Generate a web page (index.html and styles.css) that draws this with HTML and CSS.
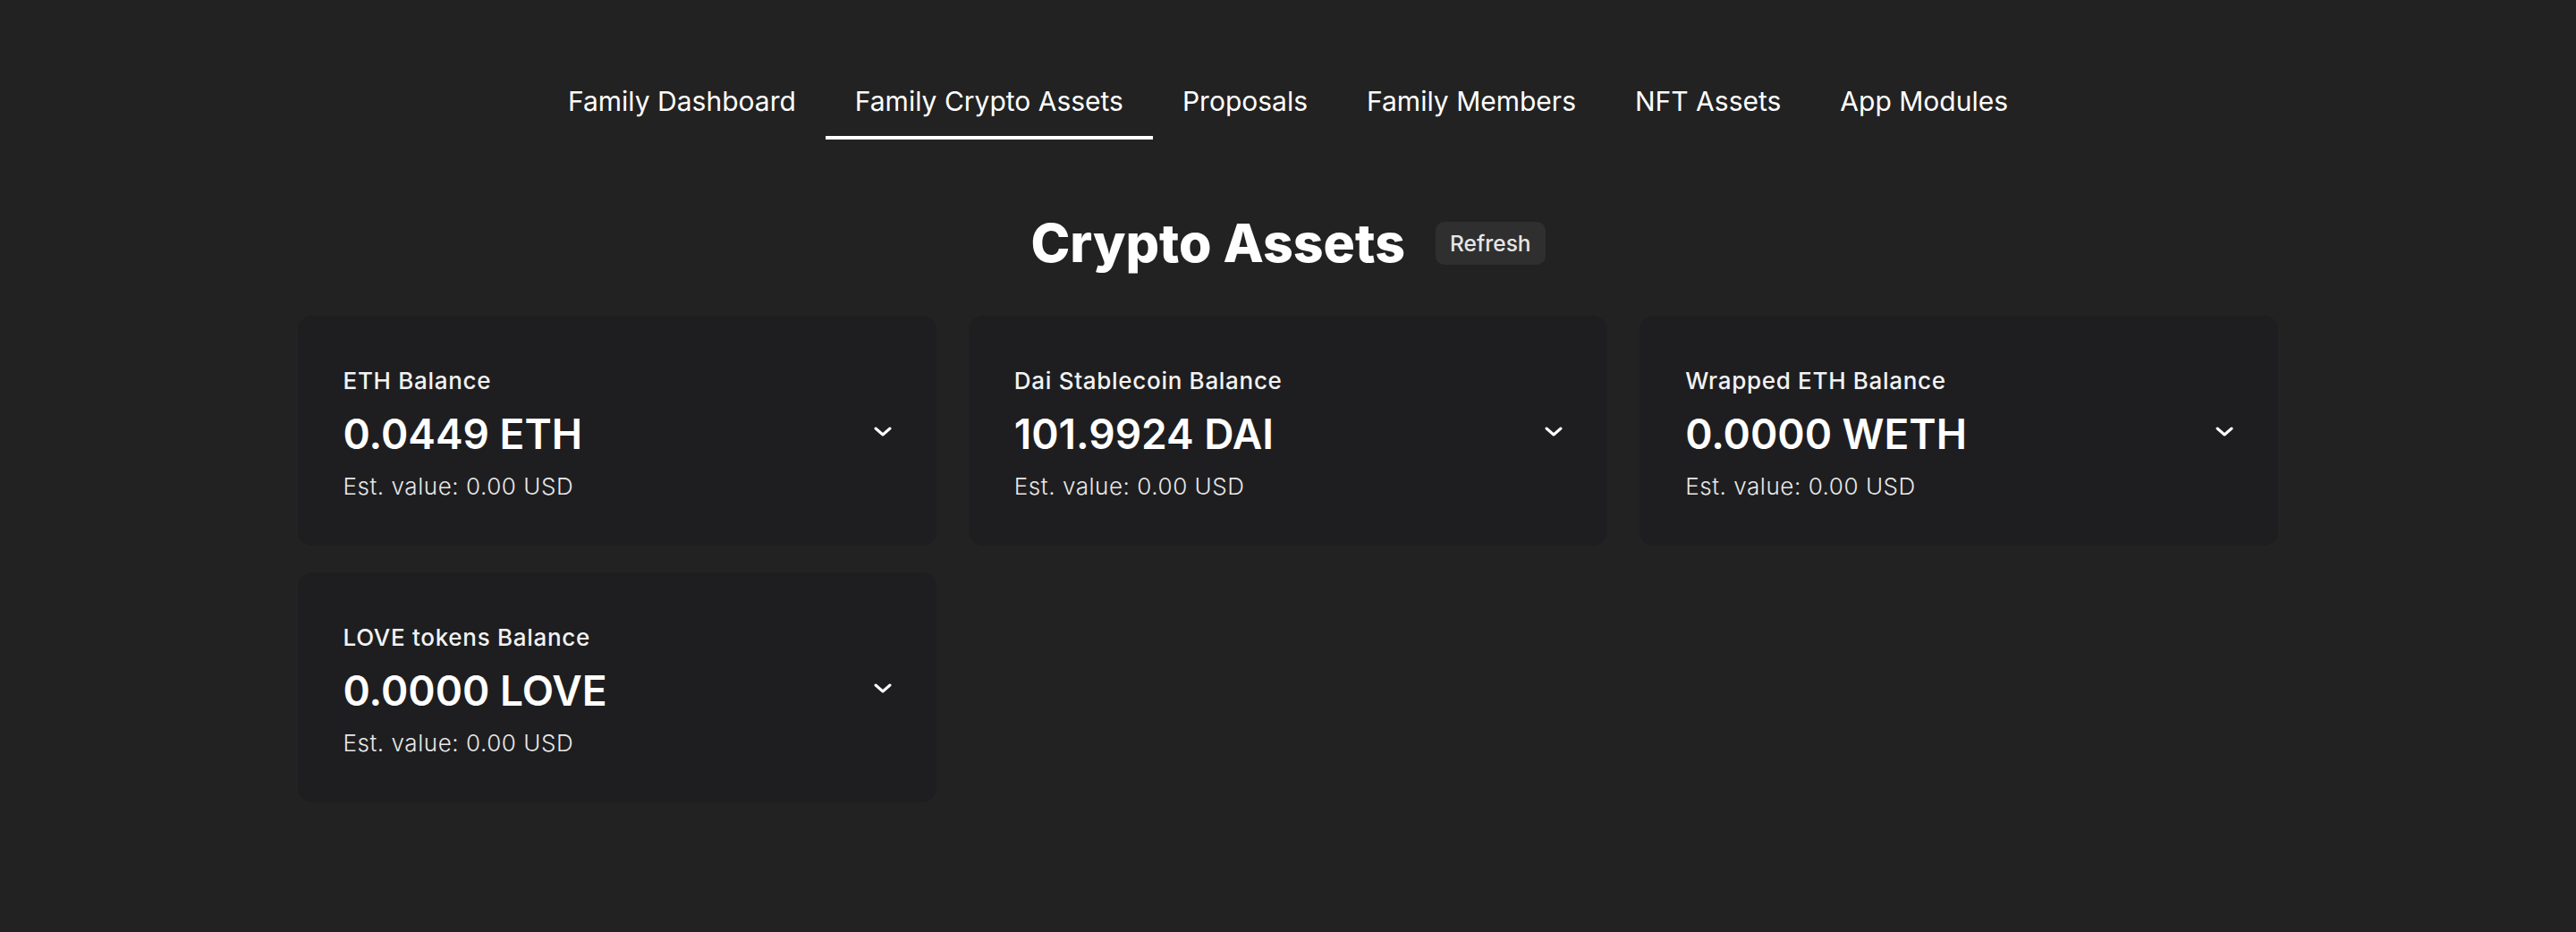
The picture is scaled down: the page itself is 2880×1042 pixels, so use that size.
FILE: index.html
```html
<!DOCTYPE html>
<html lang="en">
<head>
<meta charset="utf-8">
<title>Family Crypto Assets</title>
<link rel="stylesheet" href="styles.css">
</head>
<body>
<nav class="tabs">
  <a class="tab">Family Dashboard</a>
  <a class="tab active">Family Crypto Assets</a>
  <a class="tab">Proposals</a>
  <a class="tab">Family Members</a>
  <a class="tab">NFT Assets</a>
  <a class="tab">App Modules</a>
</nav>
<main class="content">
  <div class="title-row">
    <h1 class="title">Crypto Assets</h1>
    <button class="refresh">Refresh</button>
  </div>
  <div class="grid">
    <div class="card">
      <div class="info">
        <div class="label">ETH Balance</div>
        <div class="value">0.0449 ETH</div>
        <div class="est">Est. value: 0.00 USD</div>
      </div>
      <svg class="chev" viewBox="0 0 20 11" width="20" height="11"><polyline points="2,2 10,9 18,2"/></svg>
    </div>
    <div class="card">
      <div class="info">
        <div class="label">Dai Stablecoin Balance</div>
        <div class="value">101.9924 DAI</div>
        <div class="est">Est. value: 0.00 USD</div>
      </div>
      <svg class="chev" viewBox="0 0 20 11" width="20" height="11"><polyline points="2,2 10,9 18,2"/></svg>
    </div>
    <div class="card">
      <div class="info">
        <div class="label">Wrapped ETH Balance</div>
        <div class="value">0.0000 WETH</div>
        <div class="est">Est. value: 0.00 USD</div>
      </div>
      <svg class="chev" viewBox="0 0 20 11" width="20" height="11"><polyline points="2,2 10,9 18,2"/></svg>
    </div>
    <div class="card">
      <div class="info">
        <div class="label">LOVE tokens Balance</div>
        <div class="value">0.0000 LOVE</div>
        <div class="est">Est. value: 0.00 USD</div>
      </div>
      <svg class="chev" viewBox="0 0 20 11" width="20" height="11"><polyline points="2,2 10,9 18,2"/></svg>
    </div>
  </div>
</main>
</body>
</html>
```

FILE: styles.css
```css
html, body {
  margin: 0;
  padding: 0;
  background: #222222;
  color: #ffffff;
  font-family: Inter, "Noto Sans", sans-serif;
}

.tabs {
  display: flex;
  justify-content: center;
  padding-top: 95px;
}

.tab {
  font-size: 30px;
  line-height: 36px;
  font-weight: 400;
  color: #ffffff;
  padding: 0 33px 21px;
  border-bottom: 4px solid transparent;
  cursor: pointer;
}

.tab.active {
  border-bottom-color: #ffffff;
}

.content {
  width: 2215px;
  margin: 0 auto;
}

.title-row {
  display: flex;
  justify-content: center;
  align-items: center;
  gap: 34px;
  margin-top: 81px;
}

.title {
  margin: 0;
  font-size: 59px;
  line-height: 70px;
  font-weight: 800;
}

.refresh {
  height: 48px;
  padding: 0 16px;
  border: none;
  border-radius: 10px;
  background: #2f2f2f;
  color: #e6e6e6;
  font-family: Inter, "Noto Sans", sans-serif;
  font-size: 24.5px;
  font-weight: 500;
}

.grid {
  display: grid;
  grid-template-columns: repeat(3, 1fr);
  column-gap: 36px;
  row-gap: 30px;
  margin-top: 46px;
}

.card {
  display: flex;
  align-items: center;
  justify-content: space-between;
  background: #1e1e20;
  border-radius: 16px;
  padding: 57px 50px 50px 51px;
}

.label {
  font-size: 26px;
  line-height: 32px;
  font-weight: 500;
  letter-spacing: 0.7px;
  color: #f2f2f2;
}

.value {
  margin-top: 15px;
  font-size: 46px;
  line-height: 56px;
  font-weight: 600;
  color: #ffffff;
}

.est {
  margin-top: 15px;
  font-size: 26px;
  line-height: 32px;
  font-weight: 300;
  letter-spacing: 0.55px;
  color: #e8e8e8;
}

.chev {
  fill: none;
  stroke: #ffffff;
  stroke-width: 3;
  stroke-linecap: round;
  stroke-linejoin: round;
  margin-top: -6px;
}
```
